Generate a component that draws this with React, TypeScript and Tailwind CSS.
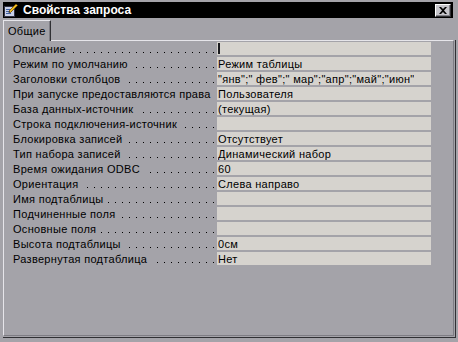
import React from "react";

const rows: [string, string][] = [
  ["Описание", ""],
  ["Режим по умолчанию", "Режим таблицы"],
  ["Заголовки столбцов", "\"янв\";\" фев\";\" мар\";\"апр\";\"май\";\"июн\";\"июл\";\"авг\";\"сен\";\"окт\""],
  ["При запуске предоставляются права", "Пользователя"],
  ["База данных-источник", "(текущая)"],
  ["Строка подключения-источник", ""],
  ["Блокировка записей", "Отсутствует"],
  ["Тип набора записей", "Динамический набор"],
  ["Время ожидания ODBC", "60"],
  ["Ориентация", "Слева направо"],
  ["Имя подтаблицы", ""],
  ["Подчиненные поля", ""],
  ["Основные поля", ""],
  ["Высота подтаблицы", "0см"],
  ["Развернутая подтаблица", "Нет"],
];

function Icon() {
  return (
    <svg width="14" height="14" viewBox="0 0 14 14">
      <rect x="0.5" y="3.5" width="10" height="10" fill="#c8d0e8" stroke="#303040" />
      <rect x="2" y="6" width="6" height="1" fill="#4060a0" />
      <rect x="2" y="8" width="6" height="1" fill="#4060a0" />
      <rect x="2" y="10" width="5" height="1" fill="#4060a0" />
      <path d="M5 8 L12 1 L13.5 2.5 L6.5 9.5 Z" fill="#f0c020" stroke="#805000" strokeWidth="0.8" />
      <path d="M5 8 L6.5 9.5 L4.5 10 Z" fill="#303030" />
    </svg>
  );
}

function CloseButton() {
  return (
    <div className="w-[16px] h-[13px] bg-[#c6c5cb] border-t border-l border-t-white border-l-white border-r border-b border-r-[#303034] border-b-[#303034] shadow-[inset_-1px_-1px_0_#808086] flex items-center justify-center">
      <svg width="8" height="7" viewBox="0 0 8 7">
        <path d="M0 0h2l2 2 2-2h2L5 3.5 8 7H6L4 5 2 7H0l3-3.5z" fill="#000" />
      </svg>
    </div>
  );
}

export default function App() {
  return (
    <div className="w-[458px] h-[342px] bg-[#a4a3a9] pt-[2px] font-['Liberation_Sans',Arial,sans-serif] text-[11px] tracking-[0.3px] text-black overflow-hidden">
      <div className="ml-[3px] w-[450px] h-[16px] bg-black flex items-center">
        <div className="ml-[1px] w-[14px] h-[14px]">
          <Icon />
        </div>
        <span className="ml-[5px] text-white font-bold text-[12px] tracking-normal leading-[16px] whitespace-nowrap">
          Свойства запроса
        </span>
        <div className="ml-auto mr-[2px]">
          <CloseButton />
        </div>
      </div>
      <div className="ml-[3px] h-[22px] flex relative z-10">
        <div className="mt-[2px] h-[21px] w-[48px] bg-[#a4a3a9] border-l border-t border-l-[#e6e5ea] border-t-[#e6e5ea] border-r border-r-[#303034] shadow-[inset_-1px_0_0_#7e7d84] pl-[4px] pt-[3px] leading-[14px]">
          Общие
        </div>
      </div>
      <div className="ml-[3px] w-[453px] h-[298px] border-r border-b border-[#303034] pr-[1px] pb-[1px]">
        <div className="h-full border-l border-t border-l-[#e6e5ea] border-t-[#e6e5ea] border-r border-b border-r-[#7e7d84] border-b-[#7e7d84] pl-[9px] pt-[1px] flex flex-col gap-[2px]">
          {rows.map(([label, value], i) => (
            <div key={i} className="flex h-[13px]">
              <div className="w-[201px] h-[13px] flex items-start bg-[linear-gradient(to_left,#000_1px,transparent_1px)] bg-[length:7px_1px] bg-repeat-x bg-[position:right_10px]">
                <span className="whitespace-nowrap leading-[15px] h-[13px] pr-[4px] bg-[#a4a3a9]">{label}</span>
              </div>
              <div className="ml-[3px] w-[214px] h-[13px] bg-[#d6d3ce] pl-[1px] flex">
                {i === 0 ? (
                  <div className="w-[2px] h-[11px] mt-[1px] bg-[#1a1a1e]" />
                ) : (
                  <div className="w-[196px] h-[14px] overflow-hidden whitespace-nowrap leading-[15px]">{value}</div>
                )}
              </div>
            </div>
          ))}
        </div>
      </div>
    </div>
  );
}
